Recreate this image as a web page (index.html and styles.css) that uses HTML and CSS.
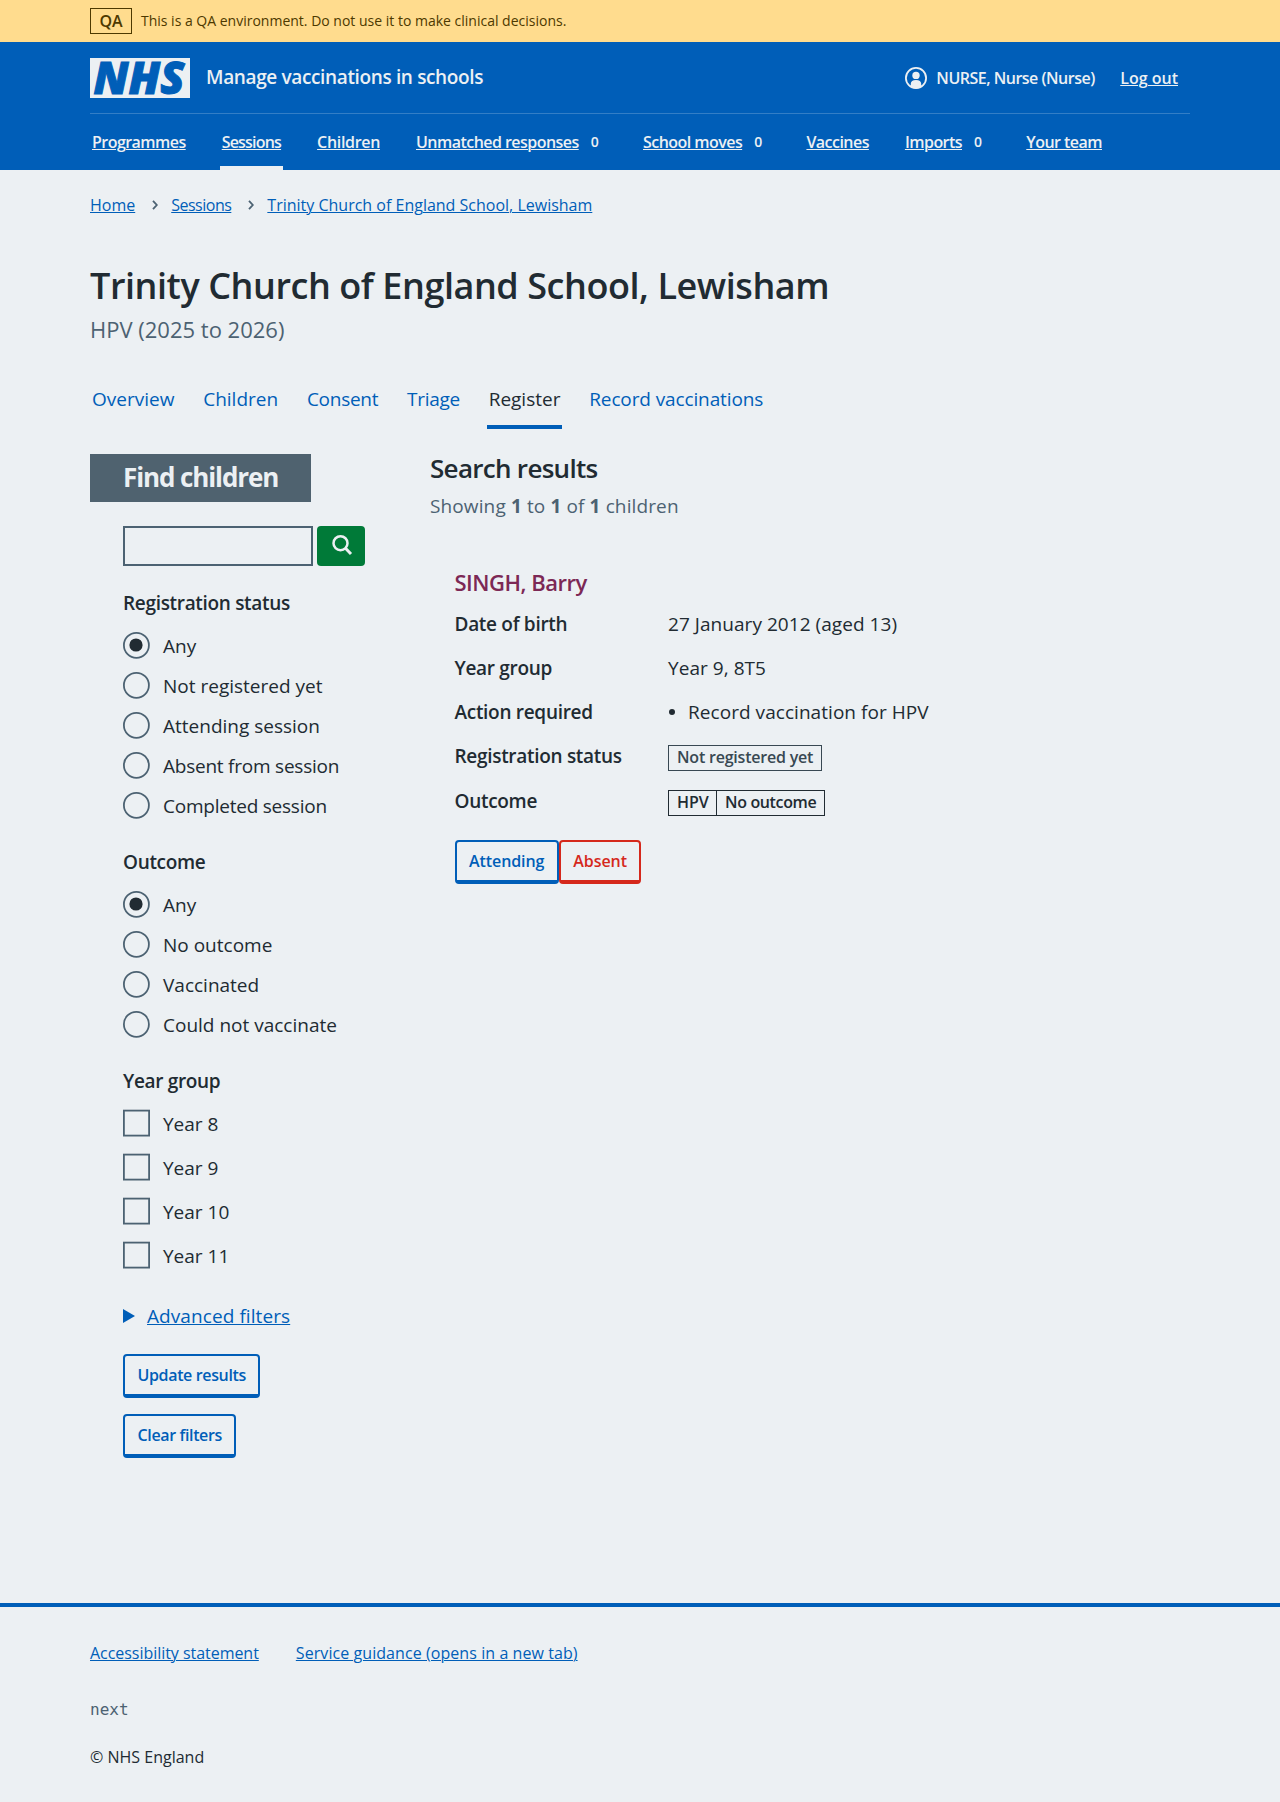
FILE: index.html
```html
<!DOCTYPE html>
<html lang="en">
<head>
<meta charset="utf-8">
<title>Trinity Church of England School, Lewisham</title>
<link rel="stylesheet" href="styles.css">
</head>
<body>
<div class="environment"><div class="container environment__inner">
  <strong class="environment__tag">QA</strong><span class="environment__text">This is a QA environment. Do not use it to make clinical decisions.</span>
</div></div>
<header class="header"><div class="container">
  <div class="header__top">
    <svg class="header__logo" width="100" height="40" viewBox="0 0 100 40" role="img" aria-label="NHS"><rect width="100" height="40" fill="#ecf0f3"/><text class="logo-text" x="3.500" y="35.500" textLength="91" lengthAdjust="spacingAndGlyphs">NHS</text></svg>
    <span class="header__service">Manage vaccinations in schools</span>
    <div class="account">
      <svg width="22" height="22" viewBox="0 0 22 22" aria-hidden="true"><circle cx="11" cy="11" r="10.100" fill="none" stroke="#ecf0f3" stroke-width="1.800"/><circle cx="11" cy="8.400" r="3.700" fill="#ecf0f3"/><path fill="#ecf0f3" d="M5.800 20v-3.200c0-2.600 1.800-3.900 5.200-3.900s5.200 1.300 5.200 3.900V20a10 10 0 0 1-10.400 0Z"/></svg>
      <span class="account__name">NURSE, Nurse (Nurse)</span>
      <a class="account__logout" href="#">Log out</a>
    </div>
  </div>
  <nav class="nav">
    <a href="#"><span>Programmes</span></a>
    <a class="nav__current" href="#"><span>Sessions</span></a>
    <a class="nav__children" href="#"><span>Children</span></a>
    <a href="#"><span>Unmatched responses</span><b>0</b></a>
    <a href="#"><span>School moves</span><b>0</b></a>
    <a href="#"><span>Vaccines</span></a>
    <a href="#"><span>Imports</span><b>0</b></a>
    <a href="#"><span>Your team</span></a>
  </nav>
</div></header>
<main class="container main">
  <nav class="breadcrumb">
    <a href="#">Home</a>
    <svg width="6" height="10" viewBox="0 0 6 10"><path d="M1 .8 4.800 5 1 9.200" fill="none" stroke="#4c6272" stroke-width="1.800"/></svg>
    <a class="breadcrumb__sessions" href="#">Sessions</a>
    <svg width="6" height="10" viewBox="0 0 6 10"><path d="M1 .8 4.800 5 1 9.200" fill="none" stroke="#4c6272" stroke-width="1.800"/></svg>
    <a href="#">Trinity Church of England School, Lewisham</a>
  </nav>
  <h1>Trinity Church of England School, Lewisham</h1>
  <p class="caption">HPV (2025 to 2026)</p>
  <nav class="tabs">
    <a href="#">Overview</a><a href="#">Children</a><a class="tabs__tight" href="#">Consent</a><a class="tabs__tight" href="#">Triage</a><a class="tabs__current" href="#">Register</a><a class="tabs__long" href="#">Record vaccinations</a>
  </nav>
  <div class="columns">
    <form class="filters">
      <h2 class="filters__heading">Find children</h2>
      <div class="filters__body">
        <div class="search"><input type="text" aria-label="Search"><button type="button" aria-label="Search"><svg width="22" height="22" viewBox="0 0 22 22"><circle cx="9.500" cy="9.200" r="7" fill="none" stroke="#ecf0f3" stroke-width="2.500"/><path d="m14.500 14.200 5.500 5.800" stroke="#ecf0f3" stroke-width="3"/></svg></button></div>
        <fieldset><legend>Registration status</legend>
          <label class="choice"><svg viewBox="0 0 27 27"><circle class="ring" cx="13.400" cy="13.300" r="12.500"/><circle class="dot" cx="13" cy="13" r="6.600"/></svg><span>Any</span></label>
          <label class="choice"><svg viewBox="0 0 27 27"><circle class="ring" cx="13.400" cy="13.300" r="12.500"/></svg><span>Not registered yet</span></label>
          <label class="choice"><svg viewBox="0 0 27 27"><circle class="ring" cx="13.400" cy="13.300" r="12.500"/></svg><span>Attending session</span></label>
          <label class="choice choice--tight"><svg viewBox="0 0 27 27"><circle class="ring" cx="13.400" cy="13.300" r="12.500"/></svg><span>Absent from session</span></label>
          <label class="choice choice--tight"><svg viewBox="0 0 27 27"><circle class="ring" cx="13.400" cy="13.300" r="12.500"/></svg><span>Completed session</span></label>
        </fieldset>
        <fieldset><legend>Outcome</legend>
          <label class="choice"><svg viewBox="0 0 27 27"><circle class="ring" cx="13.400" cy="13.300" r="12.500"/><circle class="dot" cx="13" cy="13" r="6.600"/></svg><span>Any</span></label>
          <label class="choice"><svg viewBox="0 0 27 27"><circle class="ring" cx="13.400" cy="13.300" r="12.500"/></svg><span>No outcome</span></label>
          <label class="choice"><svg viewBox="0 0 27 27"><circle class="ring" cx="13.400" cy="13.300" r="12.500"/></svg><span>Vaccinated</span></label>
          <label class="choice"><svg viewBox="0 0 27 27"><circle class="ring" cx="13.400" cy="13.300" r="12.500"/></svg><span>Could not vaccinate</span></label>
        </fieldset>
        <fieldset class="years"><legend>Year group</legend>
          <label class="choice"><svg viewBox="0 0 27 27"><rect class="ring" x=".9" y=".6" width="25.200" height="25"/></svg><span>Year 8</span></label>
          <label class="choice"><svg viewBox="0 0 27 27"><rect class="ring" x=".9" y=".6" width="25.200" height="25"/></svg><span>Year 9</span></label>
          <label class="choice"><svg viewBox="0 0 27 27"><rect class="ring" x=".9" y=".6" width="25.200" height="25"/></svg><span>Year 10</span></label>
          <label class="choice"><svg viewBox="0 0 27 27"><rect class="ring" x=".9" y=".6" width="25.200" height="25"/></svg><span>Year 11</span></label>
        </fieldset>
        <div class="advanced"><svg width="12" height="14" viewBox="0 0 12 14"><path d="M0 0v14l12-7z" fill="#005eb8"/></svg><a href="#">Advanced filters</a></div>
        <button type="button" class="button">Update results</button>
        <button type="button" class="button">Clear filters</button>
      </div>
    </form>
    <section class="results">
      <h2>Search results</h2>
      <p class="results__count">Showing <b>1</b> to <b>1</b> of <b>1</b> children</p>
      <article class="patient">
        <h3>SINGH, Barry</h3>
        <dl>
          <dt>Date of birth</dt><dd>27 January 2012 (aged 13)</dd>
          <dt>Year group</dt><dd>Year 9, 8T5</dd>
          <dt>Action required</dt><dd class="action"><i class="bullet"></i><span>Record vaccination for HPV</span></dd>
          <dt>Registration status</dt><dd class="tags"><strong class="tag tag--grey">Not registered yet</strong></dd>
          <dt>Outcome</dt><dd class="tags"><strong class="tag tag--first">HPV</strong><strong class="tag tag--outcome">No outcome</strong></dd>
        </dl>
        <div class="patient__actions"><button type="button" class="button">Attending</button><button type="button" class="button button--warning">Absent</button></div>
      </article>
    </section>
  </div>
</main>
<footer class="footer"><div class="container">
  <div class="footer__links"><a href="#">Accessibility statement</a><a class="footer__guidance" href="#">Service guidance (opens in a new tab)</a></div>
  <p class="footer__version">next</p>
  <p class="footer__copyright">© NHS England</p>
</div></footer>
</body>
</html>
```
FILE: styles.css
```css
* { box-sizing: border-box; }
body {
  margin: 0;
  background: #ecf0f3;
  color: #212b32;
  font: 19px/28px "Open Sans", "Noto Sans", sans-serif;
}
h1, h2, h3, p, dl, dd, fieldset { margin: 0; padding: 0; border: 0; }
a { color: #005eb8; text-underline-offset: 1px; text-decoration-thickness: 1px; }
button { font: inherit; }
.container { width: 1100px; margin: 0 auto; }

.environment { height: 42px; background: #ffdc8e; color: #4d3900; font-size: 14px; line-height: 24px; }
.environment__inner { display: flex; align-items: center; height: 42px; gap: 9px; }
.environment__tag { border: 1px solid; padding: 0 8.4px; font-size: 16px; font-weight: 600; height: 26px; }

.header { background: #005eb8; color: #ecf0f3; height: 128px; font-size: 16px; line-height: 24px; }
.header a { color: inherit; }
.header__top { display: flex; align-items: center; height: 72px; border-bottom: 1px solid #337ec6; }
.header__logo { overflow: visible; }
.logo-text { font: italic 800 44px "Open Sans", sans-serif; fill: #005eb8; stroke: #005eb8; stroke-width: 1px; }
.header__service { margin-left: 16px; padding-bottom: 2px; font-size: 19px; font-weight: 600; letter-spacing: -0.36px; }
.account { display: flex; align-items: center; margin-left: auto; padding-right: 12px; font-weight: 600; }
.account__name { margin: 0 25.5px 0 9px; letter-spacing: -0.5px; }
.nav { display: flex; height: 56px; gap: 32px; font-weight: 600; letter-spacing: -0.54px; }
.nav a { display: flex; align-items: center; padding: 6px 2px 2px; text-decoration: none; border-bottom: 4px solid transparent; }
.nav a span { text-decoration: underline; text-decoration-thickness: 1px; text-underline-offset: 1px; }
.nav b { font-size: 14px; font-weight: 600; margin: 0 8.8px 0 12px; }
.nav .nav__current { border-color: #ecf0f3; letter-spacing: -0.8px; }
.nav .nav__children { letter-spacing: -0.32px; }

.main { padding-top: 23px; min-height: 1433px; }
.breadcrumb { display: flex; align-items: center; font-size: 16px; line-height: 24px; }
.breadcrumb svg { margin: 0 13px 0 17px; }
.breadcrumb__sessions { letter-spacing: -0.5px; }
h1 { margin-top: 47px; font-size: 36px; line-height: 44px; font-weight: 600; letter-spacing: -0.44px; }
.caption { margin-top: 5px; font-size: 22px; line-height: 32px; color: #4c6272; }
.tabs { display: flex; gap: 24.8px; margin-top: 40px; height: 44px; }
.tabs a { padding: 0 2px; text-decoration: none; }
.tabs .tabs__current { color: #212b32; border-bottom: 4px solid #005eb8; }
.tabs__tight { letter-spacing: -0.28px; }
.tabs__long { letter-spacing: -0.12px; }

.columns { display: flex; margin-top: 25px; }
.filters { width: 340px; }
.filters__heading { display: inline-block; vertical-align: top; width: 221px; height: 48px; padding-left: 33px; background: #4f626f; color: #ecf0f3; font-size: 26px; line-height: 46px; font-weight: 700; letter-spacing: -1.1px; }
.filters__body { padding: 24px 0 0 33px; }
.search { display: flex; gap: 4px; margin-bottom: 23px; }
.search input { width: 190px; height: 40px; border: 2px solid #4c6272; background: none; }
.search button { display: flex; align-items: center; justify-content: center; width: 47.5px; height: 40px; padding: 0 0 3px 2px; border: 0; border-radius: 4px; background: #007a38; }
fieldset { margin-bottom: 16px; }
legend { padding: 0 0 15px; font-weight: 600; letter-spacing: -0.32px; }
.choice { display: flex; height: 40px; gap: 13px; }
.choice svg { width: 27px; height: 27px; overflow: visible; }
.choice--tight { letter-spacing: -0.23px; }
.ring { fill: none; stroke: #4c6272; stroke-width: 1.8; }
.dot { fill: #212b32; }
.years .choice { height: 44px; }
.advanced { display: flex; align-items: center; gap: 12px; margin-bottom: 24px; letter-spacing: 0.08px; }
.button { display: block; height: 44px; margin: 0 0 16px; padding: 0 12.5px; border: 2px solid #005eb8; border-bottom-width: 4px; border-radius: 4px; background: none; color: #005eb8; font-size: 16px; line-height: 38px; font-weight: 600; letter-spacing: -0.36px; }
.patient__actions .button--warning { border-color: #d5281b; color: #d5281b; letter-spacing: -0.2px; }

.results h2 { margin-top: -4px; font-size: 26px; line-height: 36px; font-weight: 600; letter-spacing: -0.7px; }
.results__count { margin-top: 6px; color: #4c6272; letter-spacing: 0.12px; }
.results__count b { font-weight: 700; }
.patient { padding: 48px 0 0 24.5px; }
.patient h3 { font-size: 22px; font-weight: 600; color: #7c2855; margin-bottom: 14px; letter-spacing: -0.5px; }
.patient dl { display: grid; grid-template-columns: 213.5px auto; row-gap: 16px; }
.patient dt { font-weight: 600; letter-spacing: -0.3px; }
.patient dd { letter-spacing: 0.05px; }
.action { display: flex; align-items: center; gap: 13px; }
.bullet { width: 6px; height: 6px; margin-left: 1px; border-radius: 50%; background: #212b32; }
.tags { display: flex; padding-top: 3px; }
.patient .tag { height: 26px; padding: 0 8px; border: 1px solid #212b32; font-size: 16px; line-height: 23px; font-weight: 600; letter-spacing: -0.21px; }
.patient .tag--first { padding-right: 7.2px; border-right: 0; letter-spacing: 0; }
.patient .tag--outcome { letter-spacing: -0.36px; }
.patient .tag--grey { color: #384852; border-color: #384852; }
.patient__actions { display: flex; margin-top: 24px; }
.patient__actions .button { letter-spacing: -0.08px; }

.footer { border-top: 4px solid #005eb8; padding-top: 34px; height: 199px; font-size: 16px; line-height: 24px; }
.footer__links { display: flex; gap: 37px; }
.footer__links a { letter-spacing: -0.04px; }
.footer__links .footer__guidance { letter-spacing: 0.07px; }
.footer__version { margin-top: 33px; font-family: "DejaVu Sans Mono", monospace; color: #4c6272; }
.footer__copyright { margin-top: 23px; }
```
